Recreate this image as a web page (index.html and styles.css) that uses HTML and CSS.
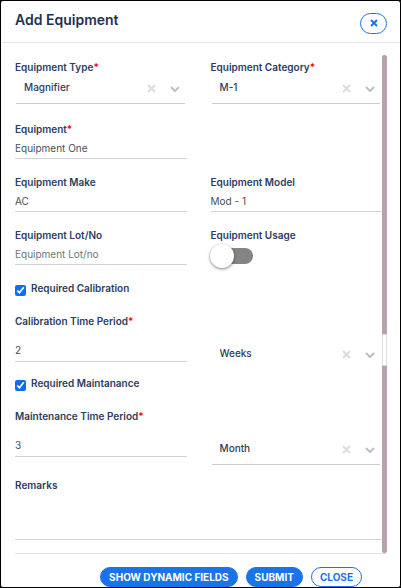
FILE: index.html
```html
<!DOCTYPE html>
<html lang="en">
<head>
<meta charset="utf-8">
<meta name="viewport" content="width=device-width, initial-scale=1">
<title>Add Equipment</title>
<link rel="stylesheet" href="styles.css">
</head>
<body>
<form class="dialog">
  <header class="header">
    <h1 class="title">Add Equipment</h1>
    <button class="dismiss" type="button" aria-label="Close dialog">
      <svg width="8" height="8" viewBox="0 0 8 8"><path d="M1 1l6 6M7 1L1 7" stroke="currentColor" stroke-width="2" fill="none"/></svg>
    </button>
  </header>
  <main class="body">
    <div class="fields">
      <div class="row row-select">
        <div class="field">
          <label class="label" for="type">Equipment Type<span class="required">*</span></label>
          <div class="picker">
            <select class="select" id="type"><option>Magnifier</option></select>
            <button class="clear" type="button" aria-label="Clear type"><svg width="9" height="9" viewBox="0 0 9 9"><path d="M1 1l7 7M8 1L1 8"/></svg></button>
            <svg class="chevron" width="10" height="6" viewBox="0 0 10 6"><path d="M1 1l4 4 4-4"/></svg>
          </div>
        </div>
        <div class="field">
          <label class="label" for="category">Equipment Category<span class="required">*</span></label>
          <div class="picker">
            <select class="select" id="category"><option>M-1</option></select>
            <button class="clear" type="button" aria-label="Clear category"><svg width="9" height="9" viewBox="0 0 9 9"><path d="M1 1l7 7M8 1L1 8"/></svg></button>
            <svg class="chevron" width="10" height="6" viewBox="0 0 10 6"><path d="M1 1l4 4 4-4"/></svg>
          </div>
        </div>
      </div>
      <div class="row">
        <div class="field">
          <label class="label" for="equipment">Equipment<span class="required">*</span></label>
          <input class="input" id="equipment" type="text" value="Equipment One">
        </div>
      </div>
      <div class="row">
        <div class="field">
          <label class="label" for="make">Equipment Make</label>
          <input class="input" id="make" type="text" value="AC">
        </div>
        <div class="field">
          <label class="label" for="model">Equipment Model</label>
          <input class="input" id="model" type="text" value="Mod - 1">
        </div>
      </div>
      <div class="row">
        <div class="field">
          <label class="label" for="lot">Equipment Lot/No</label>
          <input class="input" id="lot" type="text" placeholder="Equipment Lot/no">
        </div>
        <div class="field">
          <label class="label" for="usage">Equipment Usage</label>
          <input class="switch" id="usage" type="checkbox" role="switch">
        </div>
      </div>
      <div class="check">
        <input class="checkbox" id="calibration" type="checkbox" checked>
        <label class="label" for="calibration">Required Calibration</label>
      </div>
      <div class="row row-period">
        <div class="field">
          <label class="label" for="calibration-period">Calibration Time Period<span class="required">*</span></label>
          <input class="input" id="calibration-period" type="text" value="2">
        </div>
        <div class="picker picker-plain">
          <select class="select" aria-label="Calibration unit"><option>Weeks</option></select>
          <button class="clear" type="button" aria-label="Clear calibration unit"><svg width="9" height="9" viewBox="0 0 9 9"><path d="M1 1l7 7M8 1L1 8"/></svg></button>
          <svg class="chevron" width="10" height="6" viewBox="0 0 10 6"><path d="M1 1l4 4 4-4"/></svg>
        </div>
      </div>
      <div class="check">
        <input class="checkbox" id="maintenance" type="checkbox" checked>
        <label class="label" for="maintenance">Required Maintanance</label>
      </div>
      <div class="row row-period">
        <div class="field">
          <label class="label" for="maintenance-period">Maintenance Time Period<span class="required">*</span></label>
          <input class="input" id="maintenance-period" type="text" value="3">
        </div>
        <div class="picker">
          <select class="select" aria-label="Maintenance unit"><option>Month</option></select>
          <button class="clear" type="button" aria-label="Clear maintenance unit"><svg width="9" height="9" viewBox="0 0 9 9"><path d="M1 1l7 7M8 1L1 8"/></svg></button>
          <svg class="chevron" width="10" height="6" viewBox="0 0 10 6"><path d="M1 1l4 4 4-4"/></svg>
        </div>
      </div>
      <div class="field field-remarks">
        <label class="label" for="remarks">Remarks</label>
        <textarea class="input remarks" id="remarks"></textarea>
      </div>
    </div>
    <div class="scrollbar" aria-hidden="true">
      <span class="track track-above"></span>
      <span class="thumb"></span>
      <span class="track track-below"></span>
    </div>
  </main>
  <footer class="footer">
    <button class="button" type="button">SHOW DYNAMIC FIELDS</button>
    <button class="button" type="submit">SUBMIT</button>
    <button class="button button-outline" type="button">CLOSE</button>
  </footer>
</form>
</body>
</html>
```
FILE: styles.css
```css
* {
  box-sizing: border-box;
}

body {
  margin: 0;
  background: #000;
  color: #2b3d60;
  font: 500 10px/16px Inter, "Liberation Sans", sans-serif;
}

button,
input,
select,
textarea {
  margin: 0;
  font: inherit;
}

.dialog {
  min-height: 100vh;
  border: 1px solid #000;
  border-radius: 3px;
  background: #fff;
}

.header {
  display: flex;
  align-items: center;
  justify-content: space-between;
  height: 42px;
  padding: 2px 13px 0 14px;
  border-bottom: 1px solid #e6e8ea;
}

.title {
  margin: 0 0 6px;
  color: #1f3154;
  font-size: 14px;
  font-weight: 600;
  line-height: 20px;
}

.dismiss {
  display: flex;
  align-items: center;
  justify-content: center;
  width: 27px;
  height: 21px;
  margin-top: 1px;
  padding: 0;
  border: 1px solid #1a73e8;
  border-radius: 11px;
  background: #fff;
  color: #1a73e8;
}

.body {
  display: flex;
  margin: 12px 13px 0 14px;
  border-bottom: 1px solid #e2e4e6;
}

.fields {
  flex: 1;
  min-width: 0;
  padding: 4px 0 13px;
}

.row {
  display: grid;
  grid-template-columns: 1fr 1fr;
  column-gap: 24px;
  margin-bottom: 15px;
}

.row-select {
  margin-bottom: 17px;
}

.field {
  display: flex;
  flex-direction: column;
  min-width: 0;
}

.label {
  display: block;
  font-weight: 600;
  white-space: nowrap;
}

.required {
  color: #f00;
}

.input {
  width: 100%;
  height: 22px;
  padding: 0;
  border: 0;
  border-bottom: 1px solid #cfd2d6;
  border-radius: 0;
  outline: 0;
  background: transparent;
  color: #495057;
  font-weight: 400;
}

.input::placeholder {
  color: #6c757d;
  opacity: 1;
}

.picker {
  position: relative;
  margin: 0 2px 0 1px;
  border-bottom: 1px solid #ccc;
}

.picker-plain {
  border-color: transparent;
}

.select {
  display: block;
  width: 100%;
  height: 28px;
  padding: 0 48px 4px 8px;
  border: 0;
  appearance: none;
  background: transparent;
  color: #2b3d60;
}

.clear {
  position: absolute;
  right: 29px;
  bottom: 10px;
  display: flex;
  padding: 0;
  border: 0;
  background: none;
}

.clear path {
  fill: none;
  stroke: #dcdcdc;
  stroke-width: 2;
}

.chevron {
  position: absolute;
  right: 5px;
  bottom: 11px;
}

.chevron path {
  fill: none;
  stroke: #b9bfca;
  stroke-width: 2;
}

.switch {
  position: relative;
  width: 40px;
  height: 16px;
  margin: 5px 0 0 2px;
  border-radius: 8px;
  appearance: none;
  background: #858585;
}

.switch::before {
  content: "";
  position: absolute;
  top: -4px;
  left: -3px;
  width: 24px;
  height: 24px;
  border-radius: 50%;
  background: #fff;
  box-shadow: 0 1px 3px rgba(0, 0, 0, 0.5);
}

.check {
  display: flex;
  align-items: flex-start;
  gap: 5px;
  margin-bottom: 17px;
}

.checkbox {
  width: 11px;
  height: 11px;
  margin-top: 5px;
  accent-color: #0d6efd;
}

.row-period {
  align-items: end;
  margin-bottom: 5px;
}

.row-period .input {
  height: 23px;
  margin: 10px 0 8px;
}

.field-remarks {
  padding-top: 7px;
}

.remarks {
  height: 47px;
  resize: none;
}

.scrollbar {
  display: flex;
  flex-direction: column;
  width: 5px;
}

.track {
  background: #b7a3af;
}

.track-above {
  flex: 280;
  border-radius: 2px 2px 0 0;
}

.thumb {
  flex: 30;
  border: 1px solid #ddd;
  background: #fff;
}

.track-below {
  flex: 188;
  border-radius: 0 0 2px 2px;
}

.footer {
  display: flex;
  justify-content: flex-end;
  gap: 8px;
  padding: 13px 38px 0 14px;
}

.button {
  height: 20px;
  padding: 0 8px;
  border: 1px solid #1a73e8;
  border-radius: 10px;
  background: #1a73e8;
  color: #fff;
  font-size: 10px;
  font-weight: 700;
  white-space: nowrap;
}

.button-outline {
  background: #fff;
  color: #1a73e8;
}
```
